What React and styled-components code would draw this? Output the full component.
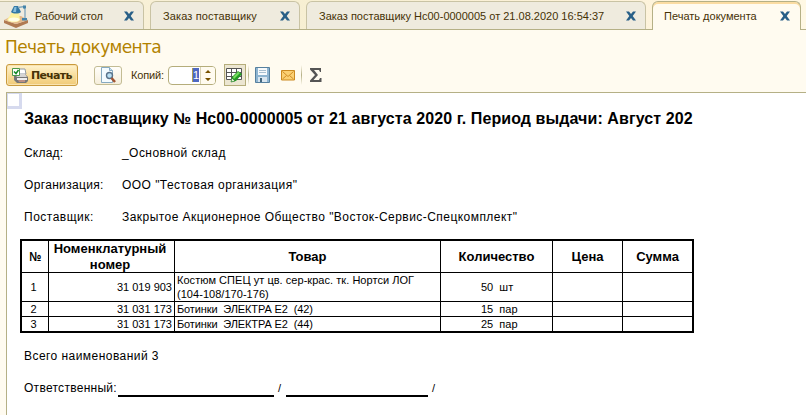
import React from 'react';
import styled, { createGlobalStyle } from 'styled-components';

const Global = createGlobalStyle`
  * { box-sizing: border-box; }
  body { margin: 0; background: #fffbf0; overflow: hidden; }
`;

const Page = styled.div`
  display: flex;
  flex-direction: column;
  width: 806px;
  height: 415px;
  background: #fffbf0;
  color: #463206;
  font: 11px/13px "Liberation Sans", Arial, sans-serif;
`;

const TabBar = styled.nav`
  display: flex;
  gap: 6px;
  height: 30px;
  padding-top: 1px;
  background: linear-gradient(90deg, #f9f1da, #f7efd2 40%, #fdf2d9 75%, #fff8e4);
  box-shadow: inset 0 -1px #b5b086;
`;

const Tab = styled.div`
  display: flex;
  align-items: center;
  justify-content: space-between;
  width: ${(p) => p.$width}px;
  height: ${(p) => (p.$active ? 29 : 28)}px;
  padding: ${(p) => (p.$active ? '0 10px 0 11px' : `1px 9px 0 ${p.$icon ? 4 : 12}px`)};
  margin-left: ${(p) => (p.$icon ? -1 : 0)}px;
  border: 1px solid ${(p) => (p.$active ? '#b5b086' : '#c9c3a4')};
  border-bottom: 0;
  border-radius: ${(p) => (p.$icon ? '0 6px 0 0' : '6px 6px 0 0')};
  background: ${(p) => (p.$active ? '#fffbf0' : '#efebde')};
  box-shadow: ${(p) => (p.$active ? 'inset 0 2px #fbdca2' : 'none')};
  white-space: nowrap;
`;

const TabLabel = styled.span`
  display: flex;
  align-items: center;
  gap: 6px;
  height: 24px;
  letter-spacing: ${(p) => p.$spacing || 0}px;
`;

const Title = styled.h1`
  height: 34px;
  margin: 0;
  padding: 7px 0 0 5px;
  color: #b28200;
  font: 400 17px/20px "DejaVu Sans", Verdana, sans-serif;
  letter-spacing: -0.63px;
`;

const Toolbar = styled.div`
  display: flex;
  align-items: center;
  height: 22px;
  margin-bottom: 6px;
  padding-left: 6px;
`;

const PrintButton = styled.button`
  display: flex;
  align-items: center;
  gap: 3px;
  width: 72px;
  height: 22px;
  margin-right: 16px;
  padding: 0 0 0 5px;
  border: 1px solid #c99a3c;
  border-radius: 3px;
  background: linear-gradient(#fff3cf, #f8dc98 55%, #f0ca78);
  box-shadow: inset 0 0 0 1px #f9e3b0;
  color: #463206;
  font: bold 11px/13px "DejaVu Sans", Verdana, sans-serif;
  letter-spacing: -0.7px;
`;

const IconButton = styled.button`
  display: flex;
  align-items: center;
  justify-content: center;
  width: 28px;
  height: 19px;
  margin-right: 9px;
  padding: 0;
  border: 1px solid #c3bc94;
  border-radius: 3px;
  background: linear-gradient(#fffefa, #f6eedb);
`;

const CopiesLabel = styled.span`
  letter-spacing: -0.15px;
`;

const CopiesField = styled.div`
  display: flex;
  align-items: center;
  justify-content: flex-end;
  width: 48px;
  height: 19px;
  margin: 0 8px 0 4px;
  border: 1px solid #b5ad7b;
  border-radius: 4px;
  background: #fff;
`;

const SelectedValue = styled.span`
  width: 7px;
  height: 14px;
  margin-right: 1px;
  background: #4e68c2;
  color: #fff;
  border-left: 1px solid #ad9c55;
  line-height: 14px;
`;

const Stepper = styled.span`
  display: flex;
  align-items: center;
  justify-content: center;
  width: 15px;
  height: 17px;
  border-left: 1px solid #d8d2b4;
  border-radius: 0 3px 3px 0;
  background: #fffbf0;
`;

const ToggleButton = styled.button`
  display: flex;
  align-items: center;
  justify-content: center;
  width: 22px;
  height: 22px;
  padding: 0;
  border: 1px solid #b5ad7b;
  background: #ece6d2;
`;

const Separator = styled.span`
  width: 1px;
  height: 20px;
  margin: 0 ${(p) => p.$after}px 0 ${(p) => p.$before}px;
  background: linear-gradient(#fffbf0, #b5b086, #fffbf0);
`;

const MailSlot = styled.span`
  display: flex;
  margin-left: 10px;
`;

const Sheet = styled.main`
  position: relative;
  flex: 1;
  margin-left: 6px;
  padding-left: 13px;
  border: solid #b5b086;
  border-width: 1px 0 0 1px;
  background: #fff;
  color: #000;
  font-size: 12px;
`;

const CellCursor = styled.span`
  position: absolute;
  top: 0;
  left: 0;
  width: 15px;
  height: 16px;
  border: solid #d6daee;
  border-width: 1px 3px 3px 1px;
`;

const Heading = styled.h2`
  height: 44px;
  margin: 0;
  padding: 16px 0 0 4px;
  font: bold 16px/20px "Liberation Sans", Arial, sans-serif;
  letter-spacing: 0.085px;
  white-space: nowrap;
`;

const Field = styled.div`
  display: flex;
  height: 32px;
  padding-left: 4px;
  line-height: 32px;
  white-space: nowrap;
`;

const FieldName = styled.span`
  width: ${(p) => p.$width || 98}px;
  letter-spacing: ${(p) => p.$spacing}px;
`;

const FieldValue = styled.span`
  letter-spacing: 0.45px;
`;

const Table = styled.div`
  display: grid;
  grid-template-columns: 27px 126px 266px 112px 70px 69px;
  grid-template-rows: 32px 29px 15px 14px;
  width: 674px;
  margin: 6px 0 7px;
  border: 2px solid #000;
`;

const Cell = styled.div`
  display: flex;
  align-items: center;
  justify-content: ${(p) => p.$align || 'center'};
  padding: ${(p) => p.$pad || '0 3px 0 0'};
  border: solid #000;
  border-width: 0 ${(p) => (p.$lastColumn ? 0 : 1)}px ${(p) => (p.$lastRow ? 0 : 1)}px 0;
  font-size: ${(p) => (p.$head ? 13 : 11)}px;
  font-weight: ${(p) => (p.$head ? 700 : 400)};
  line-height: ${(p) => (p.$head ? 16 : 14)}px;
  letter-spacing: ${(p) => p.$spacing || 0}px;
  text-align: ${(p) => (p.$head ? 'center' : 'left')};
  white-space: pre;
`;

const NumberSign = styled.span`
  transform: scaleX(0.83);
`;

const Rule = styled.span`
  width: ${(p) => p.$width}px;
  height: 2px;
  margin: 23px ${(p) => p.$after}px 0 0;
  background: #000;
`;

const Slash = styled.span`
  width: ${(p) => p.$width}px;
  font-size: 11px;
`;

const CloseIcon = () => (
  <svg width="10" height="10" viewBox="0 0 10 10">
    <path d="M0 .5h3l2 2.400L7 .5h3L6.700 5 10 9.500H7L5 7.100 3 9.500H0L3.300 5z" fill="#285f87" />
  </svg>
);

const LampIcon = () => (
  <svg width="25" height="24" viewBox="0 0 25 24">
    <path d="M0 16v3l12 5 12-5v-3l-12 4z" fill="#b07a52" />
    <path d="M0 16l8-4h9l7 4-12 4z" fill="#e3b98c" />
    <path d="M8 8L3 16c3 3 11 3 13 0l-1-8z" fill="#fdf3a0" />
    <ellipse cx="10" cy="15.500" rx="5.500" ry="2" fill="#fffee6" />
    <path d="M10 2h4l3 6c-2 2-8 2-10 0z" fill="#3479a6" />
    <path d="M10.500 3h2L12 8H9z" fill="#86bddb" />
    <path d="M14 3.500l6-1 1 3v9" fill="none" stroke="#7fa6bd" strokeWidth="1.300" />
    <path d="M19 1.500h3v3h-3zM18 14h5v2.500h-5z" fill="#4484aa" />
  </svg>
);

const PrinterIcon = () => (
  <svg width="16" height="16" viewBox="0 0 16 16">
    <path d="M6 2h7l1 5H6z" fill="#fff" stroke="#9099a2" />
    <path d="M2 7h11l3 3v4l-2 2H5l-3-3z" fill="#777" />
    <path d="M3 7h10l2 3H5z" fill="#d5d5d5" />
    <path d="M5 11h10v2H5z" fill="#eee" />
    <path d="M6 13h7v2H7z" fill="#bc8f83" />
    <path d="M.5 1.5h7v7h-7z" fill="#fff" stroke="#4d994a" />
    <path d="M2 4.5l2 2L6.5 3" fill="none" stroke="#128a24" strokeWidth="1.5" />
  </svg>
);

const PreviewIcon = () => (
  <svg width="16" height="16" viewBox="0 0 16 16">
    <path d="M1.5.5h8l3 3v12h-11z" fill="#f4fbff" stroke="#86a9c0" />
    <path d="M9.5.5v3h3" fill="#c5dfed" stroke="#86a9c0" />
    <circle cx="9.5" cy="8.5" r="3" fill="#bce0f3" stroke="#59728a" strokeWidth="1.4" />
    <path d="M11.5 11l3.5 4" stroke="#a15432" strokeWidth="2.5" />
  </svg>
);

const StepperIcon = () => (
  <svg width="6" height="11" viewBox="0 0 6 11">
    <path d="M0 3l3-3 3 3zM0 8h6l-3 3z" fill="#785200" />
  </svg>
);

const GridEditIcon = () => (
  <svg width="17" height="16" viewBox="0 0 17 16">
    <path d="M.5 1.5h15v11H.5z" fill="#fff" />
    <path d="M.5 1.5h15v11H.5zM.5 5.5h15M.5 9.5h15M5.5 1.5v11M10.5 1.5v11" fill="none" stroke="#555" />
    <path d="M5 15l1-5 6-6 4 3-6 7z" fill="#249b24" />
    <path d="M7 10l5-5 2 1-6 6z" fill="#75db5d" />
    <path d="M5 15l1-4 3 3z" fill="#e8f5d8" stroke="#16761a" strokeWidth=".6" />
  </svg>
);

const SaveIcon = () => (
  <svg width="16" height="16" viewBox="0 0 16 16">
    <path d="M.5.5h14v15H.5z" fill="#8fb5d1" stroke="#56809f" />
    <path d="M3 1h9v7H3z" fill="#f7fafc" />
    <path d="M4 3.500h7M4 5.500h7" stroke="#a8bfd0" />
    <path d="M3 10h9v5H3z" fill="#d9e6f0" />
    <path d="M5 11h2v4H5z" fill="#44677f" />
  </svg>
);

const MailIcon = () => (
  <svg width="14" height="11" viewBox="0 0 14 11">
    <path d="M.5.5h13v9.500H.5z" fill="#fbd073" stroke="#cb8a21" />
    <path d="M1.500 1.500L7 6.500l5.500-5M1.500 9L5.500 5.500M12.500 9L8.500 5.500" fill="none" stroke="#d18e27" />
  </svg>
);

const SumIcon = () => (
  <svg width="12" height="14" viewBox="0 0 12 14">
    <path d="M0 0h11v4h-1L9 2H4l4 5-4.500 5H9l1-2h1.500v4H0v-1.500L5 7 0 1.500z" fill="#555" />
  </svg>
);

const rows = [
  ['1', '31 019 903', 'Костюм СПЕЦ ут цв. сер-крас. тк. Нортси ЛОГ\n(104-108/170-176)', '50  шт', 0.04],
  ['2', '31 031 173', 'Ботинки  ЭЛЕКТРА Е2  (42)', '15  пар', -0.12],
  ['3', '31 031 173', 'Ботинки  ЭЛЕКТРА Е2  (44)', '25  пар', -0.12],
];

export default function App() {
  return (
    <Page>
      <Global />
      <TabBar>
        <Tab $width={145} $icon>
          <TabLabel $spacing={-0.1}><LampIcon />Рабочий стол</TabLabel>
          <CloseIcon />
        </Tab>
        <Tab $width={150}>
          <TabLabel $spacing={0.12}>Заказ поставщику</TabLabel>
          <CloseIcon />
        </Tab>
        <Tab $width={340}>
          <TabLabel>Заказ поставщику Нс00-0000005 от 21.08.2020 16:54:37</TabLabel>
          <CloseIcon />
        </Tab>
        <Tab $width={149} $active>
          <TabLabel>Печать документа</TabLabel>
          <CloseIcon />
        </Tab>
      </TabBar>
      <Title>Печать документа</Title>
      <Toolbar>
        <PrintButton><PrinterIcon />Печать</PrintButton>
        <IconButton><PreviewIcon /></IconButton>
        <CopiesLabel>Копий:</CopiesLabel>
        <CopiesField>
          <SelectedValue>1</SelectedValue>
          <Stepper><StepperIcon /></Stepper>
        </CopiesField>
        <ToggleButton><GridEditIcon /></ToggleButton>
        <Separator $before={2} $after={6} />
        <SaveIcon />
        <MailSlot><MailIcon /></MailSlot>
        <Separator $before={6} $after={8} />
        <SumIcon />
      </Toolbar>
      <Sheet>
        <CellCursor />
        <Heading>Заказ поставщику № Нс00-0000005 от 21 августа 2020 г. Период выдачи: Август 202</Heading>
        <Field>
          <FieldName $spacing={0.2}>Склад:</FieldName>
          <FieldValue>_Основной склад</FieldValue>
        </Field>
        <Field>
          <FieldName $spacing={0.34}>Организация:</FieldName>
          <FieldValue>ООО "Тестовая организация"</FieldValue>
        </Field>
        <Field>
          <FieldName $spacing={0.5}>Поставщик:</FieldName>
          <FieldValue>Закрытое Акционерное Общество "Восток-Сервис-Спецкомплект"</FieldValue>
        </Field>
        <Table>
          <Cell $head $pad="0"><NumberSign>№</NumberSign></Cell>
          <Cell $head>{'Номенклатурный\nномер'}</Cell>
          <Cell $head $pad="0">Товар</Cell>
          <Cell $head $pad="0">Количество</Cell>
          <Cell $head $pad="0">Цена</Cell>
          <Cell $head $pad="0" $lastColumn>Сумма</Cell>
          {rows.map(([number, code, name, amount, spacing], i) => {
            const lastRow = i === rows.length - 1;
            return (
              <React.Fragment key={number}>
                <Cell $lastRow={lastRow}>{number}</Cell>
                <Cell $lastRow={lastRow} $align="flex-end" $pad="0 2px 0 0">{code}</Cell>
                <Cell $lastRow={lastRow} $align="flex-start" $pad="0 0 0 2px" $spacing={spacing}>{name}</Cell>
                <Cell $lastRow={lastRow} $align="flex-start" $pad="0 0 0 40px">{amount}</Cell>
                <Cell $lastRow={lastRow} />
                <Cell $lastRow={lastRow} $lastColumn />
              </React.Fragment>
            );
          })}
        </Table>
        <Field>
          <FieldValue>Всего наименований 3</FieldValue>
        </Field>
        <Field>
          <FieldName $width={94} $spacing={0.28}>Ответственный:</FieldName>
          <Rule $width={156} $after={4} />
          <Slash $width={8}>/</Slash>
          <Rule $width={142} $after={4} />
          <Slash $width={8}>/</Slash>
        </Field>
      </Sheet>
    </Page>
  );
}
